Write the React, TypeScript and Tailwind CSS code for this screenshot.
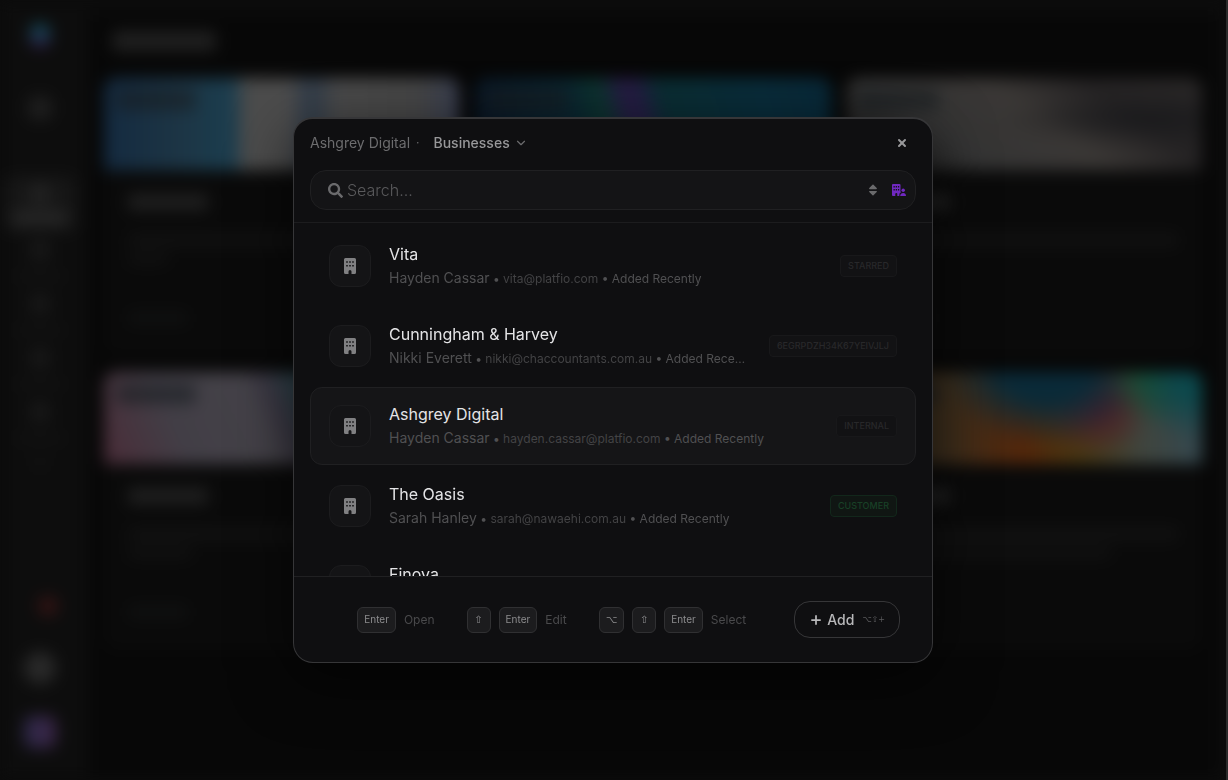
import React, { useState } from "react";
import { FaSearch, FaSort } from "react-icons/fa";
import { ChevronDown, Plus, X } from "lucide-react";
import { clsx } from "clsx";

interface Business {
  name: string;
  contact?: string;
  email?: string;
  tag?: string;
}

const businesses: Business[] = [
  { name: "Vita", contact: "Hayden Cassar", email: "vita@platfio.com", tag: "STARRED" },
  { name: "Cunningham & Harvey", contact: "Nikki Everett", email: "nikki@chaccountants.com.au", tag: "6EGRPDZH34K67YEIVJLJ" },
  { name: "Ashgrey Digital", contact: "Hayden Cassar", email: "hayden.cassar@platfio.com", tag: "INTERNAL" },
  { name: "The Oasis", contact: "Sarah Hanley", email: "sarah@nawaehi.com.au", tag: "CUSTOMER" },
  { name: "Finova" },
];

const cards = [
  { banner: "bg-[linear-gradient(90deg,#142a40_0%,#1c3444_20%,#1b3d4e_36%,#4c4c4c_40%,#4c4c4c_52%,#303c4a_58%,#4a4a4a_66%,#464646_88%,#383e50_100%)]", line: "w-10" },
  { banner: "bg-[linear-gradient(75deg,#0a1524_0%,#0a2530_30%,#0c332e_38%,#241c42_44%,#241c42_48%,#0a2d33_54%,#092c3a_80%,#082838_100%)]", line: "w-10" },
  { banner: "bg-[radial-gradient(ellipse_at_85%_45%,#1a1a1c_0%,transparent_35%),linear-gradient(35deg,#1c1c1c_0%,#343434_30%,#3a3735_55%,#242223_75%,#282626_100%)]", line: "w-0" },
  { banner: "bg-[linear-gradient(65deg,#4a2c38_0%,#423e46_22%,#444248_44%,#3c3844_50%,#2c424a_58%,#343848_76%,#123040_100%)]", line: "w-16" },
  { banner: "bg-[linear-gradient(90deg,#1c2c38_0%,#2c3440_50%,#382c38_100%)]", line: "w-16" },
  { banner: "bg-[radial-gradient(18%_70%_at_98%_5%,#0c484c_30%,transparent_100%),radial-gradient(12%_60%_at_86%_0%,#184c30_20%,transparent_100%),radial-gradient(30%_90%_at_56%_-10%,#0a2a38_45%,transparent_100%),radial-gradient(16%_55%_at_70%_38%,#4e2029_20%,transparent_100%),linear-gradient(90deg,#2a2420_0%,#3c2e1c_28%,#54260a_50%,#483812_66%,#40443c_82%,#344850_100%)]", line: "w-60" },
];

function BuildingIcon({ className }: { className?: string }) {
  return (
    <svg viewBox="0 0 12 16" className={className} fill="currentColor" aria-hidden="true">
      <path
        fillRule="evenodd"
        d="M1.5 0h9A1.5 1.5 0 0 1 12 1.5v13a1.5 1.5 0 0 1-1.5 1.5H7.500v-2.500a1.500 1.500 0 0 0-3 0V16H1.500A1.500 1.500 0 0 1 0 14.500v-13A1.500 1.500 0 0 1 1.500 0ZM2.200 3.200v1.600h1.600V3.200Zm3 0v1.600h1.600V3.200Zm3 0v1.600h1.600V3.200ZM2.200 7v1.600h1.600V7Zm3 0v1.600h1.600V7Zm3 0v1.600h1.600V7Z"
      />
    </svg>
  );
}

function BuildingUserIcon({ className }: { className?: string }) {
  return (
    <svg viewBox="0 0 14 12" className={className} fill="currentColor" aria-hidden="true">
      <path
        fillRule="evenodd"
        d="M1 0h6.500a1 1 0 0 1 1 1v4.500A2.600 2.600 0 0 0 9 8.200 3 3 0 0 0 7.300 11v.9H5.300V10a1 1 0 0 0-2 0v1.900H1a1 1 0 0 1-1-1V1a1 1 0 0 1 1-1ZM1.500 2v1.500h1.300V2Zm2.200 0v1.500H5V2Zm2.200 0v1.500h1.300V2ZM1.500 5v1.500h1.300V5Zm2.200 0v1.500H5V5Zm2.200 0v1.500h1.300V5Z"
      />
      <circle cx="11.200" cy="6.300" r="1.700" />
      <path d="M8.200 11.900c0-1.900 1.300-3 3-3s2.800 1.100 2.800 3Z" />
    </svg>
  );
}

function Shortcut({ keys, label }: { keys: string[]; label: string }) {
  return (
    <div className="flex items-center gap-2 text-xs text-[#4a4a4c]">
      {keys.map((k) => (
        <kbd
          key={k}
          className={clsx(
            "flex h-[26px] min-w-6 items-center justify-center rounded-md border border-[#303032] bg-[#1c1c1e] px-1.5 text-[10px] text-[#8c8c8e]",
            k === "Enter" ? "font-['Inter',sans-serif]" : "font-['DejaVu_Sans',sans-serif]"
          )}
        >
          {k}
        </kbd>
      ))}
      {label}
    </div>
  );
}

function Tag({ label }: { label: string }) {
  return (
    <span
      className={clsx(
        "flex h-[22px] shrink-0 items-center rounded border px-[7px] text-[9px] font-medium",
        label === "CUSTOMER"
          ? "border-[#12271b] bg-[#101613] text-[#184026]"
          : "border-[#18181a] bg-[#121214] text-[#28282a]"
      )}
    >
      {label}
    </span>
  );
}

// Dimmed dashboard that sits behind the dialog
function Dashboard() {
  return (
    <div className="flex h-screen overflow-hidden bg-[#0d0d0d] blur-[8px]" aria-hidden="true">
      <aside className="flex w-[88px] shrink-0 flex-col items-center py-6 pr-2">
        <div className="h-6 w-5 rounded-full bg-[linear-gradient(180deg,#145060_30%,#301c48_80%)]" />
        <div className="mt-12 size-6 rounded-lg bg-[#1e1e1e]" />
        <div className="mt-14 flex h-14 w-18 flex-col items-center justify-between rounded-lg bg-[#161616] py-2">
          <div className="size-5 rounded bg-[#222222]" />
          <div className="h-3 w-14 rounded bg-[#282828]" />
        </div>
        <div className="mt-2 flex flex-col items-center gap-[14px]">
          {[0, 1, 2, 3].map((i) => (
            <div key={i} className="flex h-10 flex-col items-center justify-between">
              <div className="size-5 rounded bg-[#181818]" />
              <div className="h-2 w-12 rounded bg-[#131313]" />
            </div>
          ))}
          <div className="size-3 rounded bg-[#131313]" />
        </div>
        <div className="mt-auto mb-9 ml-4 size-5 rounded-full bg-[#341414]" />
        <div className="size-8 rounded-full bg-[#292929]" />
        <div className="mt-8 mb-2 size-8 rounded-lg bg-[linear-gradient(90deg,#2c2848,#3c2648)]" />
      </aside>
      <main className="mt-3 mr-2 mb-1 flex-1 bg-[#070707] px-4">
        <div className="flex h-[66px] items-center px-2 pb-2">
          <div className="h-5 w-26 rounded bg-[#202020]" />
        </div>
        <div className="grid grid-cols-3 gap-4">
          {cards.map((card) => (
            <div key={card.banner} className="flex h-[278px] flex-col overflow-hidden rounded-xl bg-[#0a0a0a]">
              <div className={clsx("h-[92px] p-3", card.banner)}>
                <div className="h-5 w-20 rounded bg-[#181c20]/60" />
              </div>
              <div className="flex flex-1 flex-col px-6 pt-6 pb-8">
                <div className="h-4 w-20 rounded bg-[#202020]" />
                <div className="mt-6 h-3 rounded bg-[#121212]" />
                <div className={clsx("mt-2 h-2.5 rounded bg-[#121212]", card.line)} />
                <div className="mt-auto h-3 w-15 rounded bg-[#101111]" />
              </div>
            </div>
          ))}
        </div>
      </main>
    </div>
  );
}

export default function App() {
  const [selected, setSelected] = useState("Ashgrey Digital");

  return (
    <div className="h-screen overflow-hidden border-r-2 border-[#2a2a2a] bg-[#0b0b0b] font-['Inter',sans-serif]">
      <Dashboard />
      <div className="fixed inset-y-0 right-0.5 left-0 flex items-center justify-center p-4">
        <div
          role="dialog"
          aria-label="Businesses"
          className="flex h-[546px] max-h-full w-full max-w-[640px] flex-col overflow-hidden rounded-[20px] border border-t-2 border-[#363638] bg-[#0f0f11] shadow-[0_16px_60px_rgba(0,0,0,0.6)]"
        >
          <header className="border-b border-[#1c1c1e] px-4 pb-3">
            <div className="flex h-[51px] items-center pb-1 text-sm text-[#6c6c6e]">
              <span>Ashgrey Digital</span>
              <span className="mx-1.5 text-xs">·</span>
              <button className="ml-2 flex items-center gap-1 font-medium text-[#98989a]">
                Businesses
                <ChevronDown className="size-3.5 text-[#6c6c6e]" />
              </button>
              <button aria-label="Close" className="mr-2 ml-auto text-[#98989a]">
                <X className="size-3" strokeWidth={4} />
              </button>
            </div>
            <label className="flex h-10 items-center rounded-2xl border border-[#202022] bg-[#141416] pr-[9px] pl-[17px]">
              <FaSearch className="size-[15px] text-[#6a6a6c]" />
              <input
                type="text"
                aria-label="Search"
                placeholder="Search..."
                className="ml-1 min-w-0 flex-1 bg-transparent text-base font-light text-white outline-none placeholder:text-[#5a5a5c]"
              />
              <button aria-label="Sort" className="mr-3 text-[#6a6a6c]">
                <FaSort className="size-3.5" />
              </button>
              <button aria-label="Filter by owner" className="text-[#7028c0]">
                <BuildingUserIcon className="h-3 w-3.5" />
              </button>
            </label>
          </header>

          <ul className="flex min-h-0 flex-1 flex-col gap-0.5 overflow-y-auto px-4 pt-1 [scrollbar-width:none]">
            {businesses.map((b) => (
              <li key={b.name} className="shrink-0">
                <button
                  onClick={() => setSelected(b.name)}
                  className={clsx(
                    "flex h-[78px] w-full items-center rounded-xl border px-[18px] text-left",
                    selected === b.name ? "border-[#202022] bg-[#151517]" : "border-transparent"
                  )}
                >
                  <span className="flex size-[42px] shrink-0 items-center justify-center rounded-xl border border-[#1c1c1e] bg-[#141416] text-[#808082]">
                    <BuildingIcon className="h-4 w-3" />
                  </span>
                  <span className="ml-[18px] min-w-0 flex-1">
                    <span className="block text-base leading-6 text-[#e4e4e6]">{b.name}</span>
                    <span className="block h-6 truncate text-xs leading-6 text-[#505052]">
                      {b.contact && (
                        <>
                          <span className="text-sm leading-6">{b.contact}</span> •{" "}
                          <span className="text-[#434345]">{b.email}</span> • Added Recently
                        </>
                      )}
                    </span>
                  </span>
                  {b.tag && (
                    <span className="ml-5 flex">
                      <Tag label={b.tag} />
                    </span>
                  )}
                </button>
              </li>
            ))}
          </ul>

          <footer className="flex h-[86px] shrink-0 items-center justify-end gap-8 border-t border-[#202022] px-8">
            <Shortcut keys={["Enter"]} label="Open" />
            <Shortcut keys={["⇧", "Enter"]} label="Edit" />
            <Shortcut keys={["⌥", "⇧", "Enter"]} label="Select" />
            <button className="ml-4 flex h-[37px] items-center rounded-2xl border border-[#363638] px-[14px] text-sm font-medium text-[#b8b8ba]">
              <Plus className="mr-1 size-3.5" strokeWidth={3} />
              Add
              <span className="ml-2 font-['DejaVu_Sans',sans-serif] text-[8px] font-normal text-[#5a5a5c]">⌥⇧+</span>
            </button>
          </footer>
        </div>
      </div>
    </div>
  );
}
